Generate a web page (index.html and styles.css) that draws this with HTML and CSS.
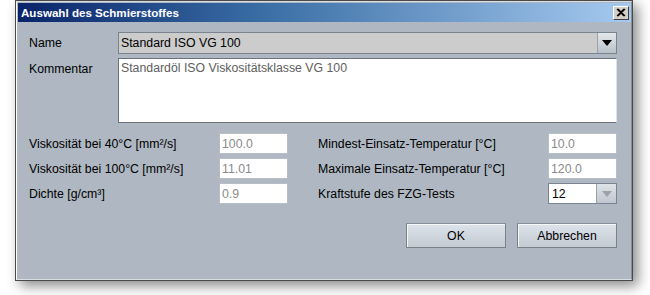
FILE: index.html
```html
<!DOCTYPE html>
<html>
<head>
<meta charset="utf-8">
<link rel="stylesheet" href="styles.css">
</head>
<body>
<div class="window">
  <div class="frame">
    <div class="titlebar">
      <span class="title">Auswahl des Schmierstoffes</span>
      <span class="close"><svg width="10" height="9" viewBox="0 0 10 9"><path d="M1 1 L8 8 M2 1 L9 8 M8 1 L1 8 M9 1 L2 8" stroke="#000" stroke-width="1.2" fill="none"/></svg></span>
    </div>
    <div class="content">
      <div class="row-top">
        <span class="lbl lbl-name">Name</span>
        <div class="combo">
          <span class="combo-text">Standard ISO VG 100</span>
          <span class="combo-btn"><svg width="10" height="6" viewBox="0 0 10 6"><path d="M0 0 H10 L5 6 Z" fill="#000"/></svg></span>
        </div>
      </div>
      <div class="row-top">
        <span class="lbl lbl-name">Kommentar</span>
        <div class="textarea">Standardöl ISO Viskositätsklasse VG 100</div>
      </div>
      <div class="fields">
        <div class="col">
          <div class="frow"><span class="lbl">Viskosität bei 40°C [mm²/s]</span><span class="input">100.0</span></div>
          <div class="frow"><span class="lbl">Viskosität bei 100°C [mm²/s]</span><span class="input">11.01</span></div>
          <div class="frow"><span class="lbl">Dichte [g/cm³]</span><span class="input">0.9</span></div>
        </div>
        <div class="col">
          <div class="frow"><span class="lbl">Mindest-Einsatz-Temperatur [°C]</span><span class="input">10.0</span></div>
          <div class="frow"><span class="lbl">Maximale Einsatz-Temperatur [°C]</span><span class="input">120.0</span></div>
          <div class="frow"><span class="lbl">Kraftstufe des FZG-Tests</span><span class="input combo2"><span class="c2text">12</span><span class="c2btn"><svg width="10" height="6" viewBox="0 0 10 6"><path d="M0 0 H10 L5 6 Z" fill="#9aa3ad"/></svg></span></span></div>
        </div>
      </div>
      <div class="buttons">
        <button class="btn">OK</button>
        <button class="btn">Abbrechen</button>
      </div>
    </div>
  </div>
</div>
</body>
</html>
```
FILE: styles.css
```css
html, body {
  margin: 0;
  padding: 0;
  background: #ffffff;
  width: 650px;
  height: 295px;
  overflow: hidden;
}
body {
  font-family: "Liberation Sans", Arial, sans-serif;
  font-size: 12.3px;
  color: #000;
}
.window {
  margin-left: 15px;
  width: 618px;
  height: 281px;
  box-sizing: border-box;
  border: 1px solid #4a4a4a;
  box-shadow: 5px 5px 12px rgba(0,0,0,0.45);
  background: #afb8c2;
}
.frame {
  height: 100%;
  box-sizing: border-box;
  border-left: 1px solid #ffffff;
  border-top: 1px solid #d8dde2;
  border-right: 1px solid #8a9098;
  border-bottom: 1px solid #d8dde2;
  display: flex;
  flex-direction: column;
}
.titlebar {
  height: 19px;
  margin: 1px 0 0 1px;
  background: linear-gradient(to right, #0a246a 0%, #3a6ea5 40%, #a6caf0 100%);
  display: flex;
  align-items: center;
  justify-content: space-between;
  padding: 0 2px 0 3px;
}
.title {
  color: #fff;
  font-weight: bold;
  font-family: "Liberation Sans", Arial, sans-serif;
  font-size: 11.6px;
}
.close {
  width: 16px;
  height: 14px;
  box-sizing: border-box;
  background: #d4d0c8;
  border: 1px solid;
  border-color: #fff #404040 #404040 #fff;
  display: flex;
  align-items: center;
  justify-content: center;
}
.content {
  flex: 1;
  padding: 10px 14px 0 12px;
}
.row-top {
  display: flex;
  margin-bottom: 4px;
}
.lbl-name {
  width: 89px;
  flex: none;
  padding-top: 4px;
}
.combo {
  flex: 1;
  height: 22px;
  box-sizing: border-box;
  border: 1px solid #7a8490;
  background: #cccccc;
  display: flex;
}
.combo-text {
  flex: 1;
  padding: 3px 0 0 2px;
}
.combo-btn {
  width: 18px;
  border-left: 1px solid #9aa3ad;
  background: linear-gradient(#e4e8ec, #b8c0c8);
  display: flex;
  align-items: center;
  justify-content: center;
}
.textarea {
  flex: 1;
  height: 65px;
  box-sizing: border-box;
  border: 1px solid #6a7480;
  border-right-color: #dde2e8;
  border-bottom-color: #6a7480;
  background: #fff;
  color: #606060;
  padding: 2px 0 0 2px;
}
.fields {
  display: flex;
  margin-top: 10px;
  gap: 30px;
}
.col {
  flex: none;
  display: flex;
  flex-direction: column;
  gap: 4px;
}
.col:first-child { width: 259px; }
.col:last-child { width: 299px; }
.frow {
  display: flex;
  justify-content: space-between;
  align-items: center;
  height: 21px;
}
.input {
  width: 69px;
  height: 21px;
  box-sizing: border-box;
  border: 1px solid #b6bec6;
  background: #fff;
  color: #8a8a8a;
  padding: 3px 0 0 2px;
}
.combo2 {
  display: flex;
  padding: 0;
  border-color: #7a8490;
  color: #000;
}
.c2text {
  flex: 1;
  padding: 3px 0 0 3px;
}
.c2btn {
  width: 19px;
  border-left: 1px solid #9aa3ad;
  background: linear-gradient(#dfe3e8, #c0c7ce);
  display: flex;
  align-items: center;
  justify-content: center;
}
.buttons {
  display: flex;
  justify-content: flex-end;
  gap: 11px;
  margin-top: 19px;
}
.btn {
  width: 100px;
  height: 25px;
  font-family: "Liberation Sans", Arial, sans-serif;
  font-size: 12.3px;
  color: #000;
  border: 1px solid #7a8088;
  border-top-color: #8a9098;
  background: linear-gradient(#dde3ea, #c2cad2);
  box-shadow: inset 1px 1px 0 #f4f6f8;
  padding: 0;
}
```
